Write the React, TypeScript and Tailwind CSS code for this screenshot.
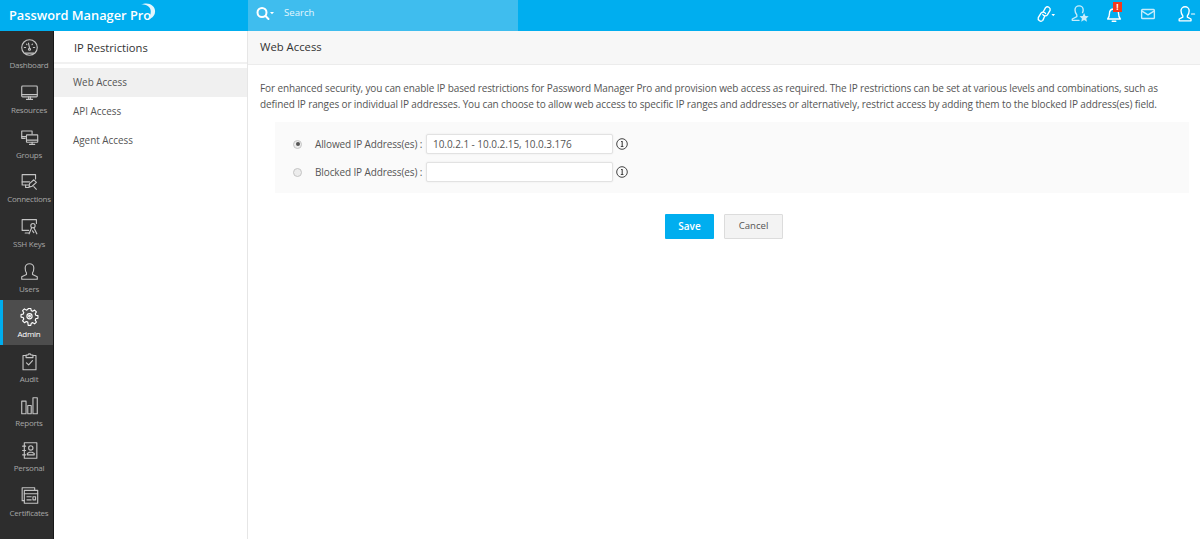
import type { ReactNode } from "react";

const font = "font-['Open_Sans','Liberation_Sans',sans-serif]";

function NavIcon({ children }: { children: ReactNode }) {
  return (
    <svg width="19" height="19" viewBox="0 0 22 22" fill="none" stroke="currentColor" strokeWidth="1.300" strokeLinecap="round" strokeLinejoin="round">
      {children}
    </svg>
  );
}

const navItems: { label: string; icon: ReactNode; active?: boolean }[] = [
  {
    label: "Dashboard",
    icon: (
      <>
        <circle cx="11" cy="11" r="9" />
        <path d="M11 11.500 9.800 6M5 11h1.500M15.500 11h1.500M7.500 7l.6.6M14.500 7l-.6.6M6 17.500h10" />
        <circle cx="11" cy="13" r="1.200" />
      </>
    ),
  },
  {
    label: "Resources",
    icon: (
      <>
        <rect x="2" y="3.500" width="18" height="12.500" rx="1" />
        <path d="M2 13.500h18M7.500 19h7M10 16v3M12 16v3" />
      </>
    ),
  },
  {
    label: "Groups",
    icon: (
      <>
        <path d="M14 7V3.500H2v8.500h4" />
        <rect x="7.500" y="8" width="13" height="8.500" rx="0.500" />
        <path d="M7.500 14h13M11 19h6M14 16.500V19M2 10h5" />
      </>
    ),
  },
  {
    label: "Connections",
    icon: (
      <>
        <path d="M18 8V3H2.500v12H10" />
        <path d="M2.500 11.500H11M6.500 15v3H10" />
        <path d="m11 13.500 5-4.500 3 3-5 4.500-3.500 1z" />
        <path d="m16 17 3 3" />
      </>
    ),
  },
  {
    label: "SSH Keys",
    icon: (
      <>
        <path d="M19 7.500V3H2.500v12.500H10" />
        <path d="M6 18.500h4" />
        <circle cx="15" cy="10" r="2.500" />
        <path d="m13.500 12.500-3 7M16 12.500l3.500 7M14.500 16l1.500 2" />
      </>
    ),
  },
  {
    label: "Users",
    icon: <path d="M7.500 12.500C6 10.500 6 8.500 6 7a5 5 0 0 1 10 0c0 1.500 0 3.500-1.500 5.500v2l5.500 2.500v3H2v-3l5.500-2.500z" />,
  },
  {
    label: "Admin",
    active: true,
    icon: (
      <>
        <path d="M9.500 1.700h3l.5 2.500 1.700.7 2.200-1.400 2.100 2.100-1.400 2.200.7 1.700 2.500.5v3l-2.500.5-.7 1.700 1.400 2.200-2.100 2.100-2.200-1.400-1.700.7-.5 2.500h-3L9 17.500l-1.700-.7-2.200 1.400L3 16.100l1.400-2.200-.7-1.700-2.500-.5v-3l2.500-.5.7-1.700L3 4.300l2.100-2.100 2.200 1.400L9 2.900z" />
        <circle cx="11" cy="10.700" r="3" />
        <circle cx="11" cy="10.700" r="1" />
      </>
    ),
  },
  {
    label: "Audit",
    icon: (
      <>
        <path d="M7 4H3.500v16.500h15V4H15" />
        <path d="M7 6.500v-3h2.200a1.900 1.900 0 0 1 3.600 0H15v3z" />
        <path d="m7.500 12.500 2.500 2.500 4.500-5" />
      </>
    ),
  },
  {
    label: "Reports",
    icon: (
      <>
        <rect x="2" y="6" width="5" height="14.500" />
        <rect x="9" y="11" width="4" height="9.500" />
        <rect x="15" y="2" width="5" height="18.500" />
      </>
    ),
  },
  {
    label: "Personal",
    icon: (
      <>
        <rect x="5" y="2" width="14.500" height="18" />
        <circle cx="12.500" cy="8" r="2.500" />
        <path d="M8.500 16v-1.500l2.500-1.500h3l2.500 1.500V16zM3 6h3.500M3 11h3.500M3 16h3.500" />
      </>
    ),
  },
  {
    label: "Certificates",
    icon: (
      <>
        <path d="M17 5V2H2.500v15H5" />
        <rect x="5" y="5" width="15.500" height="15" />
        <path d="M5 9h15.500M8 12.500h5M8 16h5" />
        <rect x="15" y="12.500" width="3" height="3.500" />
      </>
    ),
  },
];

function Sidebar() {
  return (
    <nav className="flex w-[54px] shrink-0 flex-col border-r border-[#171717] bg-[#2d2d2d]">
      {navItems.map((item) => (
        <div
          key={item.label}
          className={`flex h-[44.800px] flex-col items-center pt-[7px] ${
            item.active ? "border-l-[3px] border-[#00aeef] bg-[#4d4d4d] pl-[2px] text-white" : "pl-[5px] text-[#c4c4c4]"
          }`}
        >
          <NavIcon>{item.icon}</NavIcon>
          <span className={`mt-[2px] text-[8px] leading-[12px] tracking-[-0.25px] whitespace-nowrap ${item.active ? "text-white" : "text-[#a6a6a6]"}`}>
            {item.label}
          </span>
        </div>
      ))}
    </nav>
  );
}

function TopIcon({ children }: { children: ReactNode }) {
  return (
    <svg width="20" height="20" viewBox="0 0 22 22" fill="none" stroke="currentColor" strokeWidth="1.500" strokeLinecap="round" strokeLinejoin="round">
      {children}
    </svg>
  );
}

function TopBar() {
  return (
    <header className="flex h-[31px] shrink-0 items-stretch bg-[#00aeef] text-white">
      <div className="relative flex w-[248px] items-center pl-[9px]">
        <span className="text-[12.800px] leading-none font-semibold whitespace-nowrap">Password Manager Pro</span>
        <svg className="absolute top-[3px] left-[140px]" width="16" height="18" viewBox="0 0 16 18" fill="#e3f6fd">
          <path d="M1 2C8-2 16 3 15 9 15 13 11 16 7 17 11 13 12 7 9 4 7 2 4 1 1 2z" />
        </svg>
      </div>
      <div className="flex w-[270px] items-center bg-[#3fbdee] pb-[4px] pl-[7px]">
        <svg width="20" height="16" viewBox="0 0 20 16" fill="none" stroke="white" strokeWidth="2">
          <circle cx="7" cy="6.500" r="4.500" />
          <path d="m10.500 10 3 3" strokeLinecap="round" />
          <path d="M15 6h4l-2 2.200z" fill="white" stroke="none" />
        </svg>
        <span className="ml-[9px] text-[9.600px] text-[#e4f6fd]">Search</span>
      </div>
      <div className="flex flex-1 items-center justify-end pb-[3px]">
        <div className="flex w-[35px] justify-center">
          <TopIcon>
            <path d="M9.500 13.500 7.500 18a3 3 0 0 1-5-3l3-5a3 3 0 0 1 5 .5" />
            <path d="M8 8.500 10.500 4a3 3 0 0 1 5 3l-3 5a3 3 0 0 1-5-.5" />
            <path d="M17 11h4l-2 2.500z" fill="white" stroke="none" />
          </TopIcon>
        </div>
        <div className="flex w-[34px] justify-center text-[#c6ecfb]">
          <TopIcon>
            <path d="M7.500 12C6 10 5.500 8.500 5.500 6.500a4.500 4.500 0 0 1 9 0c0 1-.2 2-.7 3M7.500 12v2L2.500 16.500V18H10" />
            <path d="m15.500 10 1.500 3.200 3.500.4-2.600 2.300.8 3.500-3.200-1.800-3.200 1.800.8-3.500-2.600-2.300 3.500-.4z" fill="#c6ecfb" stroke="none" />
          </TopIcon>
        </div>
        <div className="relative flex w-[33px] justify-center">
          <TopIcon>
            <path d="M4 16.500c1.500-1.500 2-3 2-6s2-5 5-5 5 2 5 5 .5 4.500 2 6zM9 19h4" />
          </TopIcon>
          <span className="absolute top-[-2px] left-[16px] flex h-[10px] w-[9px] items-center justify-center bg-[#f4391c] text-[8px] leading-none font-bold text-white">
            !
          </span>
        </div>
        <div className="flex w-[35px] justify-center text-[#c6ecfb]">
          <TopIcon>
            <rect x="4" y="6" width="14" height="10" rx="1" />
            <path d="m4 7.500 7 4.500 7-4.500" />
          </TopIcon>
        </div>
        <div className="flex w-[35px] justify-center pl-[6px]">
          <TopIcon>
            <path d="M7.500 13C6 11 5.500 9 5.500 7.500a4.500 4.500 0 0 1 9 0c0 1.500-.5 3.500-2 5.500v1.500l4 2V18.500h-13V16.500l4-2z" />
            <path d="M17 11h3.500" strokeWidth="1.200" />
          </TopIcon>
        </div>
      </div>
    </header>
  );
}

function SubPanel() {
  return (
    <aside className="w-[194px] shrink-0 border-r border-[#e6e6e6] bg-white">
      <div className="flex h-[32.500px] items-center border-b-2 border-[#f1f1f1] pt-[4px] pl-[20px] text-[11.200px] text-[#333]">IP Restrictions</div>
      <div className="mt-[4px] flex flex-col text-[9.900px] text-[#555]">
        <div className="flex h-[29px] items-center bg-[#f0f0f0] pt-[1px] pl-[19px]">Web Access</div>
        <div className="flex h-[29px] items-center pt-[1px] pl-[19px]">API Access</div>
        <div className="flex h-[29px] items-center pt-[1px] pl-[19px]">Agent Access</div>
      </div>
    </aside>
  );
}

function InfoIcon() {
  return (
    <svg className="ml-[3px]" width="12" height="12" viewBox="0 0 12 12" fill="none" stroke="#444" strokeWidth="1">
      <circle cx="6" cy="6" r="5.300" />
      <path d="M5 3.500h1.200V8.500M4.800 8.500h2.600" strokeWidth="1.100" />
    </svg>
  );
}

function AddressRow({ label, value, checked }: { label: string; value: string; checked?: boolean }) {
  return (
    <div className="flex h-[20px] items-center">
      <span className="flex h-[9px] w-[9px] items-center justify-center rounded-full border border-[#c4c4c4] bg-[#ececec]">
        {checked && <span className="h-[4px] w-[4px] rounded-full bg-[#555]" />}
      </span>
      <span className="ml-[13px] w-[111px] text-[10px] tracking-[-0.12px] whitespace-nowrap text-[#555]">{label}</span>
      <div className="flex h-[20px] w-[187px] items-center rounded-[2px] border border-[#e2e2e2] bg-white pl-[6px] text-[10px] tracking-[-0.05px] text-[#555] shadow-[0_0_2px_rgba(0,0,0,0.08)]">
        {value}
      </div>
      <InfoIcon />
    </div>
  );
}

function Content() {
  return (
    <main className="min-w-0 flex-1 bg-white">
      <div className="flex h-[33.500px] items-center border-b border-[#ececec] bg-[#f7f7f7] pl-[12px] text-[11.300px] text-[#333]">Web Access</div>
      <div className="pt-[15px] pr-[11px] pl-[12px]">
        <p className="text-[10px] leading-[16px] tracking-[-0.12px] whitespace-nowrap text-[#555]">
          For enhanced security, you can enable IP based restrictions for Password Manager Pro and provision web access as required. The IP restrictions can be set at various levels and combinations, such as
          <br />
          defined IP ranges or individual IP addresses. You can choose to allow web access to specific IP ranges and addresses or alternatively, restrict access by adding them to the blocked IP address(es) field.
        </p>
        <div className="mt-[10px] ml-[15px] flex h-[71px] flex-col justify-center gap-[8px] bg-[#fafafa] pt-[2px] pl-[18px]">
          <AddressRow label="Allowed IP Address(es) :" value="10.0.2.1 - 10.0.2.15, 10.0.3.176" checked />
          <AddressRow label="Blocked IP Address(es) :" value="" />
        </div>
        <div className="mt-[21px] flex pl-[405px]">
          <button className="h-[25px] w-[49px] rounded-[1px] bg-[#00aeef] text-[10px] font-semibold text-white">Save</button>
          <button className="ml-[10px] h-[25px] w-[59px] rounded-[1px] border border-[#dcdcdc] bg-[#f3f3f3] text-[9.600px] text-[#555]">Cancel</button>
        </div>
      </div>
    </main>
  );
}

export default function App() {
  return (
    <div className={`flex h-[539px] w-[1200px] flex-col overflow-hidden bg-white ${font}`}>
      <TopBar />
      <div className="flex min-h-0 flex-1">
        <Sidebar />
        <SubPanel />
        <Content />
      </div>
    </div>
  );
}
